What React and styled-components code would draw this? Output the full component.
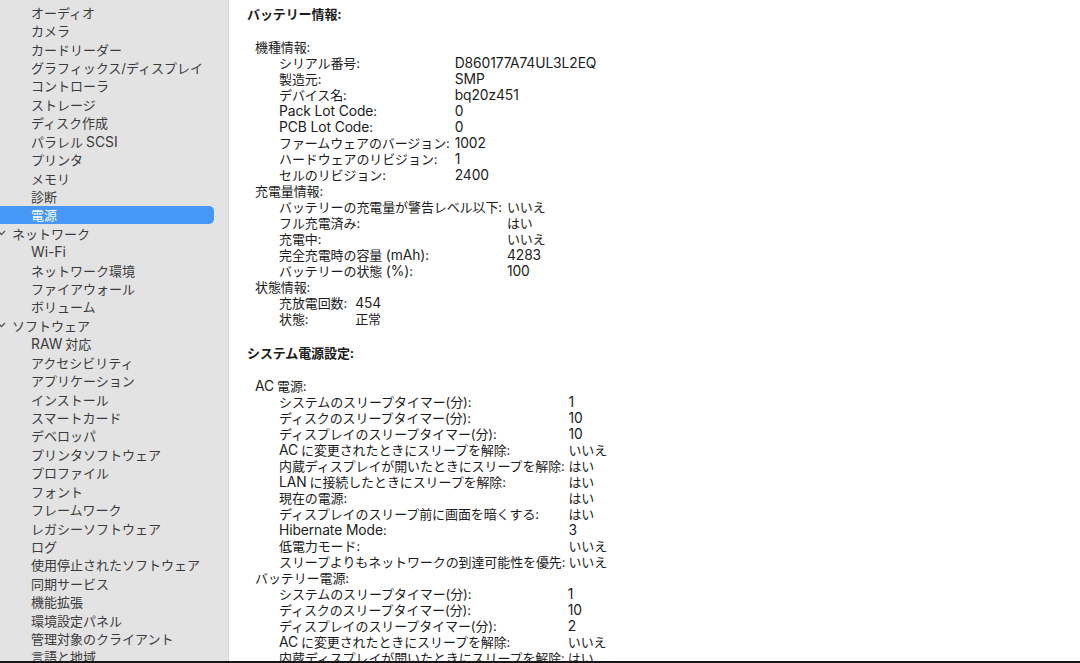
import React from "react";
import styled, { createGlobalStyle } from "styled-components";

const Global = createGlobalStyle`
  html, body { margin: 0; padding: 0; height: 100%; overflow: hidden; background: #fff; }
  #root { height: 100%; }
  * { box-sizing: border-box; }
`;

const FONT = `"Inter", "Noto Sans CJK JP", sans-serif`;

const Frame = styled.div`
  height: 663px;
  width: 1080px;
  display: flex;
  flex-direction: column;
  font-family: ${FONT};
  overflow: hidden;
`;

const Body = styled.div`
  flex: 1;
  min-height: 0;
  display: flex;
`;

const BottomEdge = styled.div`
  height: 2px;
  background: #161616;
  flex: none;
`;

const Sidebar = styled.nav`
  width: 229px;
  flex: none;
  background: #e3e3e3;
  border-right: 1px solid #d6d6d6;
  padding-top: 3px;
  overflow: hidden;
`;

const SideRow = styled.div`
  height: 18.43px;
  display: flex;
  align-items: center;
  margin-left: ${(p) => (p.$selected ? "-8px" : "0")};
  width: ${(p) => (p.$selected ? "222px" : "auto")};
  padding-left: ${(p) => (p.$group ? "0" : p.$selected ? "39px" : "31px")};
  background: ${(p) => (p.$selected ? "#4797f6" : "transparent")};
  border-radius: 5px;
  color: ${(p) => (p.$selected ? "#ffffff" : "#3b3b3b")};
  font-size: 13px;
  white-space: nowrap;
`;

const Chevron = styled.svg`
  width: 9px;
  height: 6px;
  margin-left: -3px;
  margin-right: 6px;
  flex: none;
`;

const Latin = styled.span`
  font-size: 13.85px;
  margin-left: ${(p) => (p.$spaceBefore ? "3px" : "0")};
  margin-right: ${(p) => (p.$spaceAfter ? "3px" : "0")};
`;

const Main = styled.main`
  flex: 1;
  min-width: 0;
  background: #ffffff;
  padding: 6px 0 0 18px;
  overflow: hidden;
  color: #1c1c1c;
  font-size: 13px;
  line-height: 16px;
  letter-spacing: -0.1px;
`;

const Heading = styled.div`
  font-weight: 700;
  height: 16px;
  margin-bottom: 17px;
  white-space: nowrap;
`;

const Section = styled.section`
  padding-left: 8px;
  margin-bottom: ${(p) => (p.$last ? "0" : "18px")};
`;

const GroupTitle = styled.div`
  height: 16px;
  white-space: nowrap;
`;

const Rows = styled.div`
  display: grid;
  grid-template-columns: max-content 1fr;
  column-gap: ${(p) => (p.$gap === undefined ? 5 : p.$gap)}px;
  padding-left: 24px;
`;

const Cell = styled.div`
  height: 16px;
  white-space: nowrap;
`;

const LATIN_RE = /([A-Za-z0-9(][A-Za-z0-9 .\-\/()%]*[A-Za-z0-9)%]|[A-Za-z0-9])/;
const isCJK = (s) => !!s && /[\u3000-\u9fff\uff00-\uffef]/.test(s);

function mix(text) {
  const parts = text.split(LATIN_RE).filter((s) => s !== "");
  return parts.map((part, i) => {
    const m = part.match(LATIN_RE);
    if (m && m[0] === part) {
      const prev = parts[i - 1];
      const next = parts[i + 1];
      return (
        <Latin
          key={i}
          $spaceBefore={prev && isCJK(prev.slice(-1))}
          $spaceAfter={next && isCJK(next[0])}
        >
          {part}
        </Latin>
      );
    }
    return <React.Fragment key={i}>{part}</React.Fragment>;
  });
}

const sidebarItems = [
  "オーディオ", "カメラ", "カードリーダー", "グラフィックス/ディスプレイ", "コントローラ",
  "ストレージ", "ディスク作成", "パラレルSCSI", "プリンタ", "メモリ", "診断",
  { t: "電源", sel: true },
  { t: "ネットワーク", group: true },
  "Wi-Fi", "ネットワーク環境", "ファイアウォール", "ボリューム",
  { t: "ソフトウェア", group: true },
  "RAW対応", "アクセシビリティ", "アプリケーション", "インストール", "スマートカード",
  "デベロッパ", "プリンタソフトウェア", "プロファイル", "フォント", "フレームワーク",
  "レガシーソフトウェア", "ログ", "使用停止されたソフトウェア", "同期サービス",
  "機能拡張", "環境設定パネル", "管理対象のクライアント", "言語と地域",
];

const battery = [
  {
    title: "機種情報:",
    rows: [
      ["シリアル番号:", "D860177A74UL3L2EQ"],
      ["製造元:", "SMP"],
      ["デバイス名:", "bq20z451"],
      ["Pack Lot Code:", "0"],
      ["PCB Lot Code:", "0"],
      ["ファームウェアのバージョン:", "1002"],
      ["ハードウェアのリビジョン:", "1"],
      ["セルのリビジョン:", "2400"],
    ],
  },
  {
    title: "充電量情報:",
    rows: [
      ["バッテリーの充電量が警告レベル以下:", "いいえ"],
      ["フル充電済み:", "はい"],
      ["充電中:", "いいえ"],
      ["完全充電時の容量 (mAh):", "4283"],
      ["バッテリーの状態 (%):", "100"],
    ],
  },
  {
    title: "状態情報:",
    gap: 8,
    rows: [
      ["充放電回数:", "454"],
      ["状態:", "正常"],
    ],
  },
];

const power = [
  {
    title: "AC電源:",
    gap: 3,
    rows: [
      ["システムのスリープタイマー(分):", "1"],
      ["ディスクのスリープタイマー(分):", "10"],
      ["ディスプレイのスリープタイマー(分):", "10"],
      ["ACに変更されたときにスリープを解除:", "いいえ"],
      ["内蔵ディスプレイが開いたときにスリープを解除:", "はい"],
      ["LANに接続したときにスリープを解除:", "はい"],
      ["現在の電源:", "はい"],
      ["ディスプレイのスリープ前に画面を暗くする:", "はい"],
      ["Hibernate Mode:", "3"],
      ["低電力モード:", "いいえ"],
      ["スリープよりもネットワークの到達可能性を優先:", "いいえ"],
    ],
  },
  {
    title: "バッテリー電源:",
    gap: 3,
    rows: [
      ["システムのスリープタイマー(分):", "1"],
      ["ディスクのスリープタイマー(分):", "10"],
      ["ディスプレイのスリープタイマー(分):", "2"],
      ["ACに変更されたときにスリープを解除:", "いいえ"],
      ["内蔵ディスプレイが開いたときにスリープを解除:", "はい"],
    ],
  },
];

function Group({ g }) {
  return (
    <>
      <GroupTitle>{mix(g.title)}</GroupTitle>
      <Rows $gap={g.gap}>
        {g.rows.map(([k, v], i) => (
          <React.Fragment key={i}>
            <Cell>{mix(k)}</Cell>
            <Cell>{mix(v)}</Cell>
          </React.Fragment>
        ))}
      </Rows>
    </>
  );
}

export default function App() {
  return (
    <Frame>
      <Global />
      <Body>
        <Sidebar>
          {sidebarItems.map((it, i) => {
            const item = typeof it === "string" ? { t: it } : it;
            return (
              <SideRow key={i} $selected={item.sel} $group={item.group}>
                {item.group && (
                  <Chevron viewBox="0 0 9 6">
                    <polyline points="1,1 4.5,4.5 8,1" fill="none" stroke="#555" strokeWidth="1.3" />
                  </Chevron>
                )}
                <span>{mix(item.t)}</span>
              </SideRow>
            );
          })}
        </Sidebar>
        <Main>
          <Heading>バッテリー情報:</Heading>
          <Section>
            {battery.map((g, i) => (
              <Group key={i} g={g} />
            ))}
          </Section>
          <Heading>システム電源設定:</Heading>
          <Section $last>
            {power.map((g, i) => (
              <Group key={i} g={g} />
            ))}
          </Section>
        </Main>
      </Body>
      <BottomEdge />
    </Frame>
  );
}
